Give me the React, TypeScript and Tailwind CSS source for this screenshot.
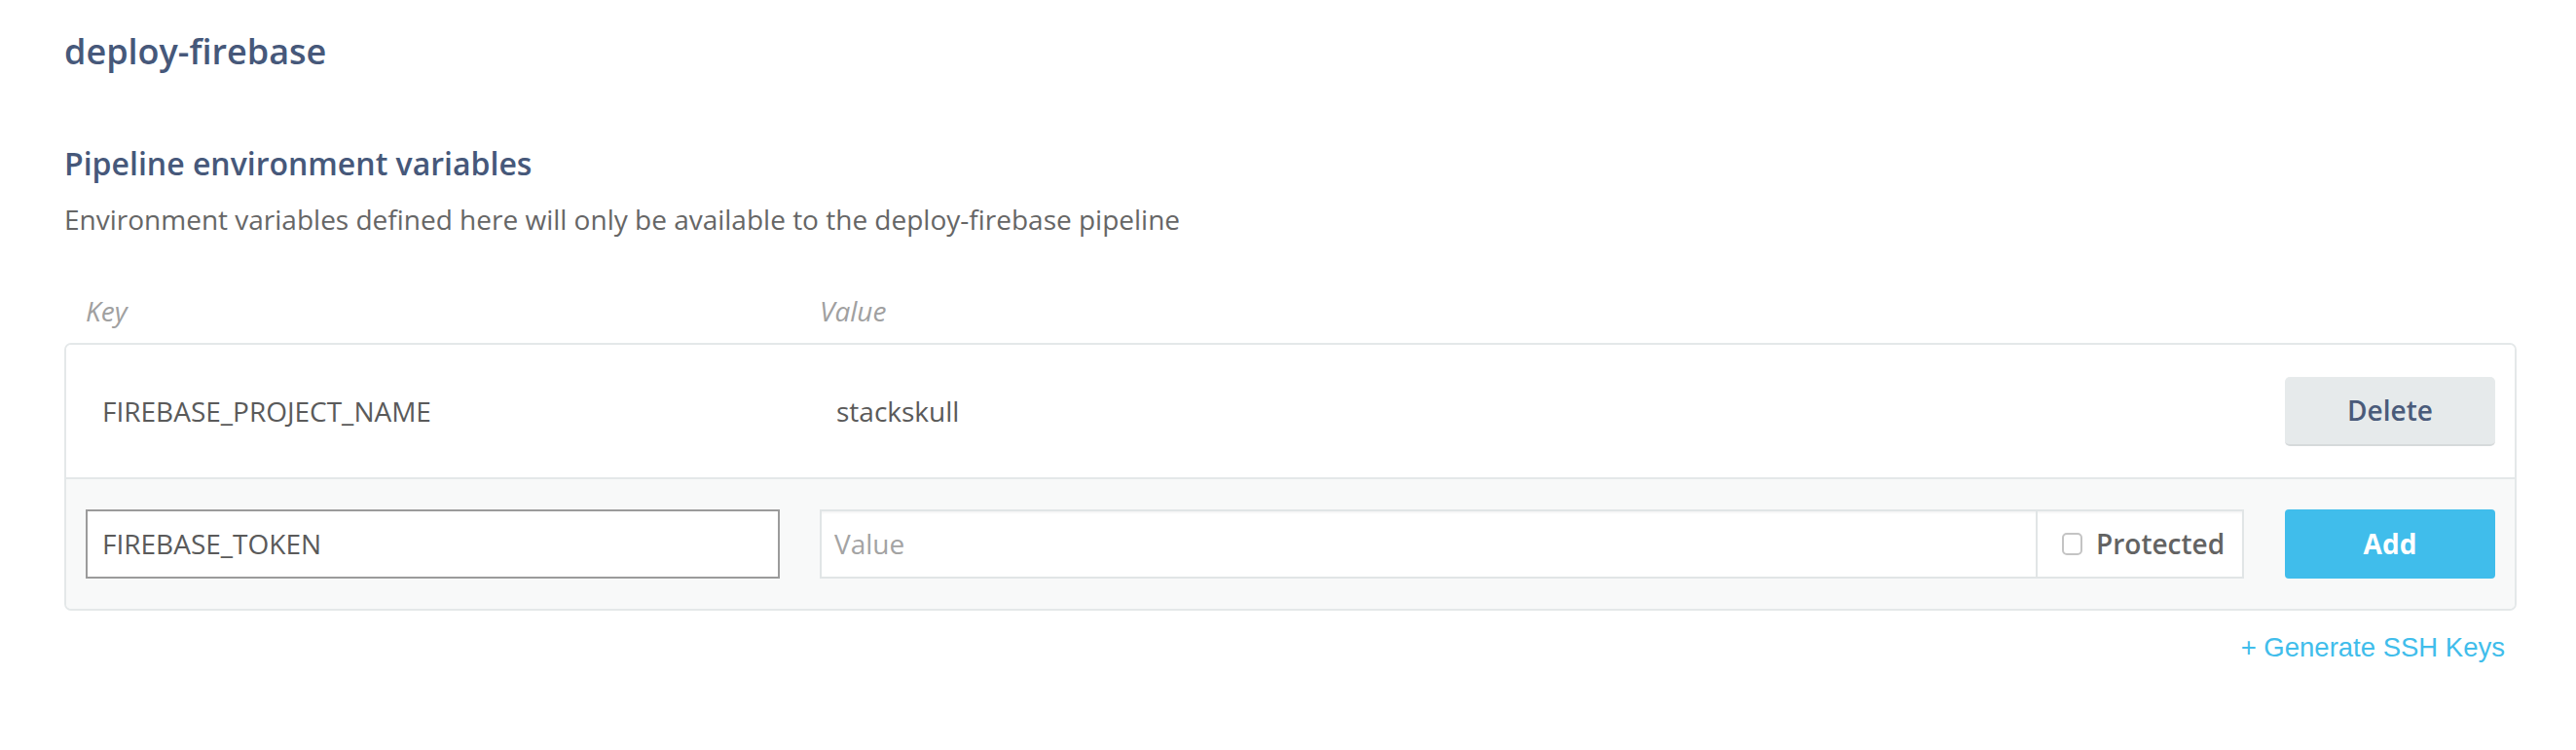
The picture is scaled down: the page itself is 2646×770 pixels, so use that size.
import React from "react";

export default function App() {
  return (
    <div className="w-[2646px] h-[770px] bg-white font-['Open_Sans',sans-serif] overflow-hidden">
      <div className="pl-[66px] pt-[30px]">
        <h1 className="text-[36px] leading-[46px] font-semibold text-[#46587a]">deploy-firebase</h1>
        <h2 className="mt-[69px] text-[32px] leading-[46px] font-semibold text-[#46587a]">
          Pipeline environment variables
        </h2>
        <p className="mt-[16px] text-[28px] leading-[37px] text-[#666666]">
          Environment variables defined here will only be available to the deploy-firebase pipeline
        </p>

        <div className="w-[2519px]">
          <div className="mt-[57px] flex px-[22px] text-[28px] leading-[37px] italic text-[#a0a0a0]">
            <div className="w-[713px]">Key</div>
            <div className="ml-[41px]">Value</div>
          </div>

          <div className="mt-[14px] rounded-[7px] border-2 border-[#e4e8e9] overflow-hidden">
            {/* Existing row */}
            <div className="flex items-center h-[136px] bg-white pl-[20px] pr-[20px] text-[28px] leading-[37px] text-[#5a5a5a]">
              <div className="w-[713px] pl-[17px]">FIREBASE_PROJECT_NAME</div>
              <div className="ml-[41px] w-[1463px] pl-[17px]">stackskull</div>
              <div className="ml-[42px] w-[216px] h-[71px] rounded-[5px] bg-[#e6eaeb] border-b-2 border-[#d6dadb] flex items-center justify-center font-semibold text-[#4a5b7a]">
                Delete
              </div>
            </div>

            {/* New row */}
            <div className="flex items-center h-[135px] bg-[#f8f9f9] border-t-2 border-[#e4e8e9] pl-[20px] pr-[20px] text-[28px] leading-[37px]">
              <div className="w-[713px] h-[71px] border-2 border-[#9b9b9b] bg-white flex items-center pl-[15px] text-[#5a5a5a]">
                FIREBASE_TOKEN
              </div>
              <div className="ml-[41px] w-[1463px] h-[71px] flex border-2 border-[#e1e5e6] bg-white shadow-[inset_0_2px_2px_rgba(0,0,0,0.04)]">
                <div className="flex-1 flex items-center pl-[13px] text-[#a3a3a3]">Value</div>
                <div className="w-[212px] border-l-2 border-[#e1e5e6] flex items-center pl-[25px]">
                  <span className="w-[21px] h-[23px] rounded-[5px] border-2 border-[#c4c4c4] bg-white"></span>
                  <span className="ml-[14px] font-semibold text-[#636363]">Protected</span>
                </div>
              </div>
              <div className="ml-[42px] w-[216px] h-[71px] rounded-[4px] bg-[#40bdeb] flex items-center justify-center font-bold text-white">
                Add
              </div>
            </div>
          </div>
        </div>
      </div>

      <div className="flex justify-end pr-[73px] mt-[23px]">
        <span className="font-['Liberation_Sans',Arial,sans-serif] text-[27.5px] leading-[30px] text-[#40bdeb]">
          + Generate SSH Keys
        </span>
      </div>
    </div>
  );
}
